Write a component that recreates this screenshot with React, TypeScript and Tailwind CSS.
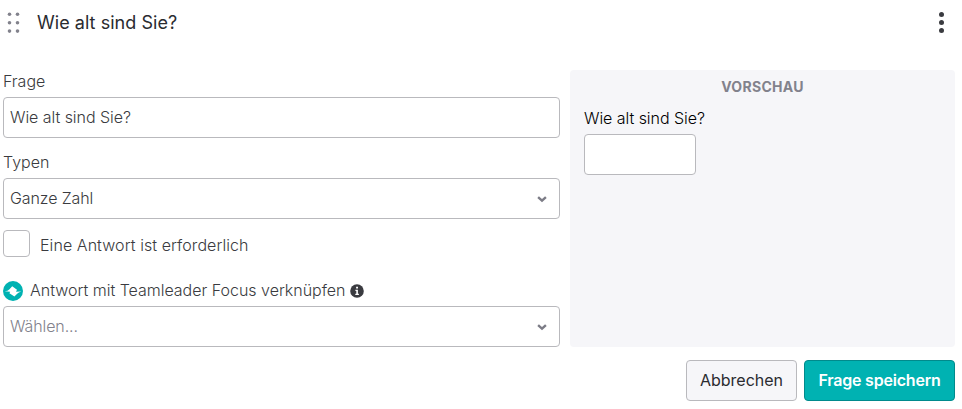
import { useState } from "react";

const controlClass =
  "h-[41px] w-full rounded-[4px] border border-[#b9b9bd] bg-white text-[#3a3b40]";

function DragHandle() {
  return (
    <svg width="14" height="24" viewBox="0 0 14 24" className="shrink-0 fill-[#82828c]">
      {[3.3, 11.7, 20.1].map((cy) => (
        <g key={cy}>
          <circle cx="2.5" cy={cy} r="1.8" />
          <circle cx="10.5" cy={cy} r="1.8" />
        </g>
      ))}
    </svg>
  );
}

function MoreIcon() {
  return (
    <svg width="6" height="23" viewBox="0 0 6 23" className="fill-[#3a3b40]">
      <circle cx="2.5" cy="3.5" r="2.5" />
      <circle cx="2.5" cy="11.5" r="2.5" />
      <circle cx="2.5" cy="19.5" r="2.5" />
    </svg>
  );
}

function ChevronIcon() {
  return (
    <svg width="10" height="8" viewBox="0 0 10 8" fill="none" className="stroke-[#7c7c86]">
      <path d="M1.1 2.1L5 5.6l3.9-3.5" strokeWidth="2.4" />
    </svg>
  );
}

function FocusLogo() {
  return (
    <svg width="20" height="20" viewBox="0 0 20 20" className="relative top-px shrink-0">
      <circle cx="10" cy="10" r="10" fill="#00b2b2" />
      <path
        d="M1.7 10.3Q5 10 6.5 8.2L9.2 5.3 14 8.7 13 10.8 18.3 10.6Q15.5 11.5 14.2 12.8L11.4 15.6 6.4 12.2 7.2 10.7z"
        fill="#fff"
      />
    </svg>
  );
}

function InfoIcon() {
  return (
    <svg width="14" height="14" viewBox="0 0 14 14" className="relative top-px shrink-0">
      <circle cx="7" cy="7" r="6.8" fill="#3a3b40" />
      <path d="M5.4 5.8h2.5v4h1v1.2H5.3V9.8h1V7h-.9zM6.1 2.7H8v1.9H6.1z" fill="#fff" />
    </svg>
  );
}

interface SelectFieldProps {
  value: string;
  placeholder?: boolean;
}

function SelectField({ value, placeholder }: SelectFieldProps) {
  return (
    <button
      type="button"
      className={`${controlClass} flex items-center justify-between pl-1.5 pr-3`}
    >
      <span className={`pb-0.5 tracking-[-0.1px] ${placeholder ? "text-[#82828c]" : ""}`}>{value}</span>
      <ChevronIcon />
    </button>
  );
}

export default function App() {
  const [question, setQuestion] = useState("Wie alt sind Sie?");
  const [required, setRequired] = useState(false);

  return (
    <div className="h-[409px] w-[962px] overflow-hidden bg-white pl-[3px] pr-[7px] font-['Inter',sans-serif] text-[16px] font-light leading-6 text-[#3a3b40]">
      {/* HEADER */}
      <header className="flex h-[70px] items-start justify-between pl-1 pr-[10px] pt-[11px]">
        <div className="flex items-center gap-4">
          <DragHandle />
          <h1 className="text-[18px] font-normal tracking-[0.04px] text-[#2a2b30]">{question}</h1>
        </div>
        <button type="button">
          <MoreIcon />
        </button>
      </header>

      <div className="flex h-[277px] gap-[10px]">
        {/* FORM */}
        <div className="flex w-[557px] flex-col">
          <label htmlFor="question" className="-mt-px h-[28px]">Frage</label>
          <input
            id="question"
            value={question}
            onChange={(e) => setQuestion(e.target.value)}
            className={`${controlClass} px-1.5 pb-0.5 tracking-[-0.05px] outline-none`}
          />
          <span className="mt-3 h-7">Typen</span>
          <SelectField value="Ganze Zahl" />
          <label className="mt-[11px] flex h-[27px] gap-[10px]">
            <input
              type="checkbox"
              checked={required}
              onChange={(e) => setRequired(e.target.checked)}
              className="size-[27px] appearance-none rounded-[4px] border border-[#b9b9bd] bg-white checked:bg-[#00b2b2]"
            />
            <span className="pt-[3px] tracking-[0.07px]">Eine Antwort ist erforderlich</span>
          </label>
          <div className="mt-[21px] flex h-7 items-start">
            <div className="flex items-center">
              <FocusLogo />
              <span className="ml-[7px] mr-[5px] tracking-[-0.01px]">Antwort mit Teamleader Focus verknüpfen</span>
              <InfoIcon />
            </div>
          </div>
          <SelectField value="Wählen..." placeholder />
        </div>

        {/* PREVIEW */}
        <section className="w-[385px] rounded-[4px] bg-[#f6f6f9] px-[14px] pt-[5px]">
          <h2 className="text-center text-[14px] font-bold tracking-[0.3px] text-[#82828c]">VORSCHAU</h2>
          <p className="mt-[7px] tracking-[-0.05px] text-black">{question}</p>
          <div className="mt-1 h-[41px] w-[112px] rounded-[4px] border border-[#b9b9bd] bg-white" />
        </section>
      </div>

      {/* ACTIONS */}
      <footer className="mt-[13px] flex justify-end gap-[7px]">
        <button
          type="button"
          className="h-[41px] w-[111px] rounded-[4px] border border-[#b9b9bd] bg-[#f6f6f9] pb-0.5 font-normal text-[#2a2b30]"
        >
          Abbrechen
        </button>
        <button
          type="button"
          className="h-[41px] w-[151px] rounded-[4px] border border-[#008a8c] bg-[#00b2b2] pb-0.5 font-semibold tracking-[-0.2px] text-white"
        >
          Frage speichern
        </button>
      </footer>
    </div>
  );
}
